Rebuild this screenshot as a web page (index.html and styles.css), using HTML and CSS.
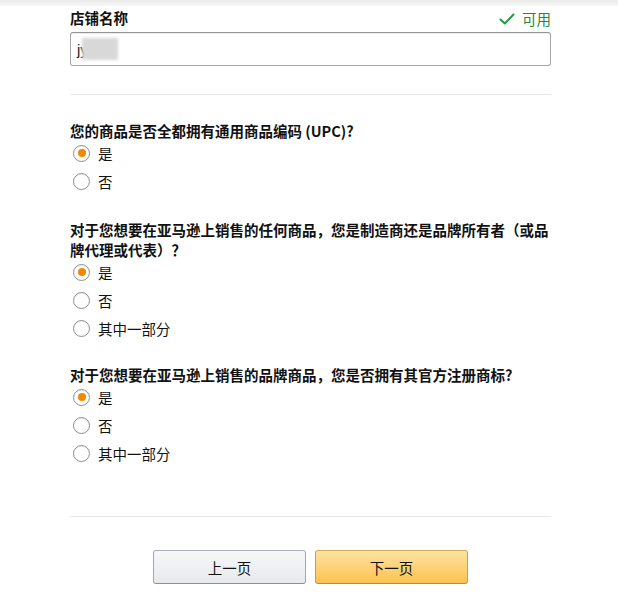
FILE: index.html
```html
<!DOCTYPE html>
<html lang="zh-CN">
<head>
<meta charset="utf-8">
<title>店铺信息</title>
<link rel="stylesheet" href="styles.css">
</head>
<body>
<div class="topbar"></div>
<main class="form">
  <div class="field-head">
    <label class="field-label" for="store">店铺名称</label>
    <span class="status">
      <svg class="check" width="16" height="12" viewBox="0 0 16 12"><path d="M1.5 6.5 L5.8 10.5 L14.5 1.5" fill="none" stroke="#1f9d3a" stroke-width="2" stroke-linecap="round" stroke-linejoin="round"/></svg>
      可用
    </span>
  </div>
  <div class="input" id="store"><span class="typed">jy</span><span class="blur"></span></div>

  <hr class="divider first">

  <section class="question q1">
    <p class="q-text">您的商品是否全都拥有通用商品编码 (UPC)?</p>
    <div class="options">
      <div class="opt"><span class="radio checked"></span><span>是</span></div>
      <div class="opt"><span class="radio"></span><span>否</span></div>
    </div>
  </section>

  <section class="question q2">
    <p class="q-text">对于您想要在亚马逊上销售的任何商品，您是制造商还是品牌所有者（或品牌代理或代表）？</p>
    <div class="options">
      <div class="opt"><span class="radio checked"></span><span>是</span></div>
      <div class="opt"><span class="radio"></span><span>否</span></div>
      <div class="opt"><span class="radio"></span><span>其中一部分</span></div>
    </div>
  </section>

  <section class="question q3">
    <p class="q-text">对于您想要在亚马逊上销售的品牌商品，您是否拥有其官方注册商标?</p>
    <div class="options">
      <div class="opt"><span class="radio checked"></span><span>是</span></div>
      <div class="opt"><span class="radio"></span><span>否</span></div>
      <div class="opt"><span class="radio"></span><span>其中一部分</span></div>
    </div>
  </section>

  <hr class="divider last">

  <div class="actions">
    <button class="btn btn-secondary">上一页</button>
    <button class="btn btn-primary">下一页</button>
  </div>
</main>
</body>
</html>
```

FILE: styles.css
```css
html, body {
  margin: 0;
  padding: 0;
  background: #fff;
}
body {
  font-family: "Noto Sans CJK SC", "Noto Sans", sans-serif;
  font-size: 14.5px;
  color: #111;
}
.topbar {
  height: 6px;
  background: linear-gradient(#ebebeb, #f7f7f7);
}
.form {
  width: 481px;
  margin: 2px 0 0 70px;
}
.field-head {
  display: flex;
  justify-content: space-between;
  align-items: center;
  height: 20px;
}
.field-label {
  font-weight: 700;
  line-height: 20px;
}
.status {
  display: flex;
  align-items: center;
  gap: 7px;
  color: #23883a;
  line-height: 20px;
  margin-top: 1px;
}
.check {
  display: block;
}
.input {
  box-sizing: border-box;
  margin-top: 4px;
  height: 34px;
  border: 1px solid #a6a6a6;
  border-top-color: #949494;
  border-radius: 3px;
  box-shadow: inset 0 1px 0 rgba(0,0,0,.07);
  display: flex;
  align-items: center;
  padding-left: 6px;
}
.typed {
  font-family: "Liberation Sans", sans-serif;
  font-size: 15px;
  color: #222;
}
.blur {
  display: inline-block;
  width: 36px;
  height: 22px;
  background: #d8d8d8;
  filter: blur(1.5px);
  margin-left: -6px;
}
.divider {
  border: 0;
  height: 1px;
  background: #e7e7e7;
  margin: 0;
}
.divider.first { margin-top: 28px; }
.divider.last { margin-top: 51px; }
.question { margin: 0; }
.q1 { margin-top: 26px; }
.q2 { margin-top: 27px; }
.q3 { margin-top: 25px; }
.q-text {
  margin: 0;
  font-weight: 700;
  line-height: 20px;
}
.options {
  display: flex;
  flex-direction: column;
  gap: 4px;
}
.opt {
  display: flex;
  align-items: center;
  gap: 8px;
  height: 24px;
  padding-left: 3px;
}
.radio {
  box-sizing: border-box;
  width: 17px;
  height: 17px;
  border: 1px solid #8f8f8f;
  border-radius: 50%;
  background: #fff;
  box-shadow: inset 0 1px 1px rgba(0,0,0,.08);
  display: flex;
  align-items: center;
  justify-content: center;
}
.radio.checked::after {
  content: "";
  width: 8px;
  height: 8px;
  border-radius: 50%;
  background: #f08804;
}
.actions {
  display: flex;
  justify-content: center;
  gap: 9px;
  margin-top: 33px;
}
.btn {
  box-sizing: border-box;
  width: 153px;
  height: 34px;
  border: 1px solid;
  border-radius: 3px;
  font-family: inherit;
  font-size: 14.5px;
  color: #111;
  padding: 0;
  cursor: pointer;
}
.btn-secondary {
  background: linear-gradient(#f7f8fa, #e7e9ec);
  border-color: #adb1b8 #a2a6ac #8d9096;
}
.btn-primary {
  background: linear-gradient(#fee2a2, #fcc34f);
  border-color: #d5ab52 #c9a047 #b88e3a;
}
```
